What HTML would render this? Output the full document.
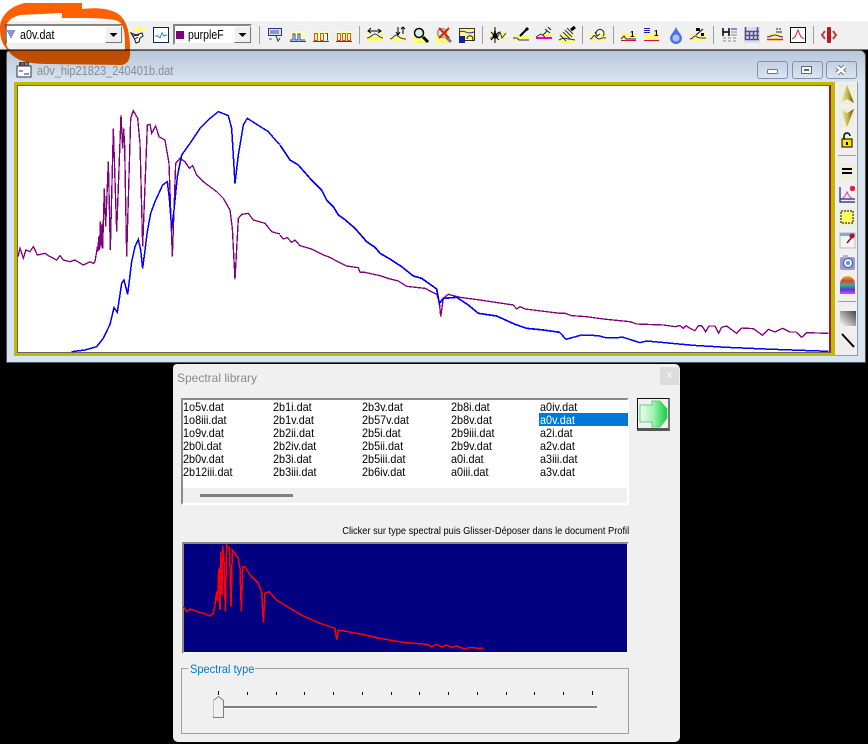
<!DOCTYPE html>
<html><head><meta charset="utf-8"><style>
html,body{margin:0;padding:0;background:#000;width:868px;height:744px;overflow:hidden}
body{position:relative;font-family:"Liberation Sans",sans-serif;color:#000}
div{position:absolute;box-sizing:border-box}
.t{white-space:nowrap;line-height:13px;font-size:11.5px;transform-origin:0 0}
.c{transform:scaleX(.906)}
.row{position:absolute;left:0;white-space:nowrap}
.wb{top:61px;height:18px;width:31px;border:1px solid #7f93ad;border-radius:3px;background:linear-gradient(#c3d0df,#d9e5f2)}
svg{position:absolute;left:0;top:0}
</style></head><body>
<div style="left:0;top:0;width:868px;height:21px;background:#fff"></div>
<div style="left:0;top:21px;width:868px;height:28px;background:#f0f0f0"></div>
<div style="left:0;top:49px;width:868px;height:1px;background:#777"></div>

<div style="left:6px;top:50px;width:860px;height:313px;background:#d7e4f2;border:1px solid #555;border-radius:4px 6px 0 0"></div>
<div style="left:7px;top:51px;width:858px;height:31px;background:linear-gradient(#b9c8d8,#d7e4f2);border-radius:3px 5px 0 0"></div>
<div class="t" style="left:37px;top:65px;color:#8b8b8b;font-size:12.500px;transform:scaleX(.88)">a0v_hip21823_240401b.dat</div>
<div class="wb" style="left:757px"></div><div class="wb" style="left:792px"></div><div class="wb" style="left:826px"></div>
<div style="left:14px;top:82px;width:821px;height:274px;background:#c4b800"></div>
<div style="left:17px;top:85px;width:814px;height:268px;background:#fff;border:1px solid #666;border-right:2px solid #9a1c1c"></div>
<div style="left:835px;top:82px;width:23px;height:274px;background:#f0f0f0;border-right:1px solid #999;border-bottom:1px solid #999"></div>

<div style="left:5px;top:24px;width:118px;height:21px;background:#fff;border:2px solid #858585;border-right-color:#eee;border-bottom-color:#eee"></div>
<div class="t" style="left:20px;top:29px;font-size:12.500px;transform:scaleX(.86)">a0v.dat</div>
<div style="left:105px;top:26px;width:17px;height:17px;background:#f0f0f0;border:1px solid;border-color:#fff #777 #777 #fff"></div>
<div style="left:173px;top:24px;width:79px;height:21px;background:#fff;border:2px solid #858585;border-right-color:#eee;border-bottom-color:#eee"></div>
<div style="left:176px;top:31px;width:8px;height:8px;background:#800080"></div>
<div class="t" style="left:188px;top:29px;font-size:12.500px;transform:scaleX(.84)">purpleF</div>
<div style="left:234px;top:26px;width:17px;height:17px;background:#f0f0f0;border:1px solid;border-color:#fff #777 #777 #fff"></div>

<div style="left:173px;top:364px;width:507px;height:378px;background:#f0f0f0;border-radius:4px 5px 5px 5px"></div>
<div class="t" style="left:177px;top:372px;color:#8b8b8b;font-size:12px">Spectral library</div>
<div style="left:660px;top:367px;width:19px;height:18px;background:#dcdcdc;color:#fff;font-size:10px;line-height:17px;text-align:center">x</div>

<div style="left:181px;top:398px;width:448px;height:107px;background:#f0f0f0;border:2px solid;border-color:#8a8a8a #fff #fff #8a8a8a"></div>
<div style="left:183px;top:400px;width:444px;height:88px;background:#fff"></div>
<div style="left:200px;top:494px;width:93px;height:3px;background:#808080"></div>
<div style="left:539px;top:413px;width:89px;height:13px;background:#0078d7"></div>
<div class="t c" style="left:183px;top:401px;font-size:12px"><span class="row" style="top:0">1o5v.dat</span><span class="row" style="top:13px">1o8iii.dat</span><span class="row" style="top:26px">1o9v.dat</span><span class="row" style="top:39px">2b0i.dat</span><span class="row" style="top:52px">2b0v.dat</span><span class="row" style="top:65px">2b12iii.dat</span></div>
<div class="t c" style="left:273px;top:401px;font-size:12px"><span class="row" style="top:0">2b1i.dat</span><span class="row" style="top:13px">2b1v.dat</span><span class="row" style="top:26px">2b2ii.dat</span><span class="row" style="top:39px">2b2iv.dat</span><span class="row" style="top:52px">2b3i.dat</span><span class="row" style="top:65px">2b3iii.dat</span></div>
<div class="t c" style="left:362px;top:401px;font-size:12px"><span class="row" style="top:0">2b3v.dat</span><span class="row" style="top:13px">2b57v.dat</span><span class="row" style="top:26px">2b5i.dat</span><span class="row" style="top:39px">2b5ii.dat</span><span class="row" style="top:52px">2b5iii.dat</span><span class="row" style="top:65px">2b6iv.dat</span></div>
<div class="t c" style="left:451px;top:401px;font-size:12px"><span class="row" style="top:0">2b8i.dat</span><span class="row" style="top:13px">2b8v.dat</span><span class="row" style="top:26px">2b9iii.dat</span><span class="row" style="top:39px">2b9v.dat</span><span class="row" style="top:52px">a0i.dat</span><span class="row" style="top:65px">a0iii.dat</span></div>
<div class="t c" style="left:540px;top:401px;font-size:12px"><span class="row" style="top:0">a0iv.dat</span><span class="row" style="top:13px;color:#fff">a0v.dat</span><span class="row" style="top:26px">a2i.dat</span><span class="row" style="top:39px">a2v.dat</span><span class="row" style="top:52px">a3iii.dat</span><span class="row" style="top:65px">a3v.dat</span></div>
<div class="t" style="right:239px;top:525px;font-size:10px;transform:scaleX(.925);transform-origin:100% 0">Clicker sur type spectral puis Glisser-Déposer dans le document Profil</div>

<div style="left:637px;top:398px;width:33px;height:33px;background:#f0f0f0;border:1px solid #111;border-bottom:3px solid #555;border-right:2px solid #777"></div>
<div style="left:182px;top:542px;width:447px;height:112px;background:#000080;border:2px solid;border-color:#8a8a8a #f6f6f6 #f6f6f6 #8a8a8a"></div>
<div style="left:181px;top:668px;width:448px;height:66px;border:1px solid #a0a0a0"></div>
<div class="t" style="left:188px;top:663px;background:#f0f0f0;color:#0078d7;padding:0 2px;font-size:12px;width:67px;overflow:visible"><span style="display:inline-block;transform:scaleX(.92);transform-origin:0 0">Spectral type</span></div>

<svg width="868" height="744" viewBox="0 0 868 744" xmlns="http://www.w3.org/2000/svg">
<defs>
<pattern id="y" width="2" height="2" patternUnits="userSpaceOnUse"><rect width="2" height="2" fill="#ffffc0"/><rect width="1" height="1" fill="#ffff30"/><rect x="1" y="1" width="1" height="1" fill="#ffff30"/></pattern>
<linearGradient id="gold" x1="0" y1="0" x2="1" y2="0"><stop offset="0" stop-color="#eeeab8"/><stop offset=".5" stop-color="#c4b94a"/><stop offset="1" stop-color="#5a5010"/></linearGradient>
<linearGradient id="grn" x1="0" y1="0" x2="1" y2="0"><stop offset="0" stop-color="#f0fff0"/><stop offset=".5" stop-color="#a0f0b0"/><stop offset="1" stop-color="#10d040"/></linearGradient>
<linearGradient id="rb" x1="0" y1="0" x2="0" y2="1"><stop offset="0" stop-color="#e8c020"/><stop offset=".25" stop-color="#e04040"/><stop offset=".5" stop-color="#40b080"/><stop offset=".75" stop-color="#4040e0"/><stop offset="1" stop-color="#f040e0"/></linearGradient>
<linearGradient id="gr2" x1="0" y1="1" x2="1" y2="0"><stop offset="0" stop-color="#fff"/><stop offset="1" stop-color="#444"/></linearGradient>
</defs>

<!-- separators -->
<g fill="#a0a0a0">
<rect x="259" y="26" width="1" height="18"/><rect x="359" y="26" width="1" height="18"/><rect x="482" y="26" width="1" height="18"/><rect x="582" y="26" width="1" height="18"/><rect x="613" y="26" width="1" height="18"/><rect x="713" y="26" width="1" height="18"/><rect x="813" y="26" width="1" height="18"/>
<rect x="838" y="155" width="18" height="1"/><rect x="838" y="301" width="18" height="1"/>
</g>
<!-- combo arrows -->
<path d="M109.500 33h8l-4 4z M238.500 33h8l-4 4z" fill="#000"/>
<path d="M7 31h8M8 33h6M9 35h4M10 37h2" stroke="#2020c0" fill="none"/>

<!-- toolbar icons -->
<g fill="none" stroke-width="1">
<g transform="translate(130,27)"><rect x="4" y="0" width="12" height="5" fill="url(#y)"/><path d="M1 6l5 2 6-2 1 3-3 2-1 4-3 1-2-5z" fill="#fff" stroke="#111"/><path d="M3 9l6-1M5 12l3-2" stroke="#111"/></g>
<g transform="translate(153,27)"><rect x=".5" y=".5" width="15" height="15" fill="#fff" stroke="#0a2a50"/><path d="M2 9h3l2 2 2-5 2 3 3-1" stroke="#3080c0"/></g>
<g transform="translate(268,28)"><rect x=".5" y=".5" width="13" height="7" fill="#d8e0f0" stroke="#303080"/><path d="M2 3h9M2 5h9" stroke="#3050b0"/><path d="M1 11h3" stroke="#b03030"/><path d="M8 8l2 5 2-3" stroke="#333"/></g>
<g transform="translate(290,28)"><rect x="1" y="3" width="14" height="9" fill="#ffffb0"/><path d="M0 12h3v-6h2v6h3v-6h2v6h5" stroke="#2040d0"/><path d="M0 13.500h16" stroke="#2040d0"/></g>
<g transform="translate(313,28)"><rect x="1" y="3" width="15" height="9" fill="#ffffb0"/><path d="M1.500 5.500h3v7h-3zM7.500 5.500h3v7h-3z" stroke="#e05020"/><path d="M0 13.500h16" stroke="#2040d0"/><path d="M12.500 5.500h2v7" stroke="#2040d0"/></g>
<g transform="translate(336,28)"><rect x="1" y="3" width="15" height="9" fill="#ffffb0"/><path d="M1.500 5.500h3v7h-3zM6.500 5.500h3v7h-3zM11.500 5.500h3v7h-3z" stroke="#e05020"/><path d="M0 13.500h16" stroke="#2040d0"/></g>
<g transform="translate(367,27)"><rect y="7" width="16" height="8" fill="url(#y)"/><path d="M1 4h13M11 2l3 2-3 2M4 1L1 4l3 2" stroke="#000"/><path d="M0 11c4 0 5-4 8-4s4 4 8 4" stroke="#2020d0"/></g>
<g transform="translate(390,27)"><rect y="8" width="16" height="7" fill="url(#y)"/><path d="M8 0v8M6 5l2 3 2-3M13 0v7M11 2l2-2 2 2" stroke="#000"/><path d="M0 12c3 0 4-4 6-4s3 4 10 4" stroke="#2020d0"/></g>
<g transform="translate(413,27)"><rect y="4" width="12" height="12" fill="url(#y)"/><circle cx="6" cy="6" r="4.500" fill="#d0f0ff" stroke="#000" stroke-width="1.500"/><path d="M10 10l5 5" stroke="#000" stroke-width="3"/></g>
<g transform="translate(436,27)"><rect y="5" width="12" height="11" fill="url(#y)"/><circle cx="6" cy="6" r="4.500" fill="#dde" stroke="#999" stroke-width="1.500"/><path d="M10 10l5 5" stroke="#777" stroke-width="3"/><path d="M3 1l10 10M13 1L3 11" stroke="#e02000" stroke-width="2"/></g>
<g transform="translate(459,28)"><rect x=".5" y=".5" width="15" height="12" fill="url(#y)" stroke="#333"/><path d="M1 4c4-3 6 3 14 0" stroke="#2020d0"/><rect y="8" width="6" height="7" fill="#1020a0"/><path d="M8 11a3 3 0 1 1 5 2" stroke="#222"/></g>
<g transform="translate(490,27)"><rect x="1" y="4" width="15" height="8" fill="url(#y)"/><path d="M0 11h3l2-8 2 8 3-6 2 6 4-5" stroke="#2020d0"/><circle cx="5" cy="9" r="2.500" fill="#000"/><path d="M1 5l8 8M9 5l-8 8M5 0v16" stroke="#000"/></g>
<g transform="translate(513,27)"><rect y="8" width="16" height="6" fill="url(#y)"/><path d="M0 11h4l2 2 10 0" stroke="#2020d0"/><path d="M7 9l7-7" stroke="#000" stroke-width="2"/><path d="M13 3l2-2" stroke="#000" stroke-width="3"/></g>
<g transform="translate(536,26)"><rect y="8" width="16" height="6" fill="url(#y)"/><path d="M0 12h16" stroke="#e000e0" stroke-width="2"/><path d="M0 11l5-3 4 3" stroke="#2020d0"/><path d="M7 9l4-4M9 3l5 4M12 1l3 3" stroke="#222"/></g>
<g transform="translate(559,27)"><rect y="6" width="14" height="10" fill="url(#y)"/><path d="M4 5l7 7M6 3l7 7M8 1l6 6M1 8l6 6" stroke="#333"/><path d="M12 3l4-3" stroke="#000" stroke-width="3"/><path d="M0 13l4-2 12 2" stroke="#2020d0"/></g>
<g transform="translate(590,27)"><rect y="7" width="16" height="7" fill="url(#y)"/><path d="M0 12c3 0 3-5 5-3s2 3 4 3 3-2 7-1" stroke="#2020d0"/><path d="M7 9a4 4 0 1 1 6 0M5 5l2 4 3-2" stroke="#222"/></g>
<g transform="translate(621,28)"><rect y="5" width="15" height="9" fill="url(#y)"/><text x="9" y="9" font-size="8" font-family="Liberation Sans" font-weight="bold" fill="#000" stroke="none">1</text><path d="M0 12.500h15" stroke="#e00060"/><path d="M0 11l3-3 2 3h10" stroke="#222"/></g>
<g transform="translate(644,27)"><rect y="6" width="15" height="9" fill="url(#y)"/><path d="M0 1.500h6M0 3.500h6M0 5.500h6" stroke="#1020c0"/><text x="10" y="9" font-size="8" font-family="Liberation Sans" font-weight="bold" fill="#000" stroke="none">1</text><path d="M0 13.500h15" stroke="#e00060"/></g>
<g transform="translate(668,27)"><path d="M8 0c2 5 6 8 6 11a6 6 0 0 1-12 0c0-3 4-6 6-11z" fill="#5070e8"/><circle cx="8" cy="11" r="3.500" fill="#b0c0ff"/></g>
<g transform="translate(690,27)"><rect y="6" width="16" height="8" fill="url(#y)"/><path d="M0 12c3 0 3-3 5-3s2 3 11 2" stroke="#2020d0"/><path d="M6 8l7-6" stroke="#000"/><rect x="6" y="1" width="4" height="3" fill="#000"/><rect x="11" y="6" width="3" height="3" fill="#000"/></g>
<g transform="translate(722,27)"><path d="M1 1v8M7 1v8M1 5h6" stroke="#000" stroke-width="1.500"/><path d="M9 2h6" stroke="#2020d0"/><path d="M9 5h6M9 8h6M1 11h3M6 11h3M11 11h3M1 14h3M6 14h3M11 14h3" stroke="#888"/></g>
<g transform="translate(744,27)"><rect x="0" y="0" width="16" height="16" fill="#dcdcec"/><path d="M1.500 0v13M5.500 4v9M9.500 4v9M13.500 0v13M1 4.500h14M1 8.500h14M1 12.500h14" stroke="#505090" stroke-width="1.500"/></g>
<g transform="translate(767,27)"><rect y="6" width="16" height="9" fill="url(#y)"/><path d="M0 12.500h16" stroke="#e000e0" stroke-width="1.500"/><path d="M0 10c4 0 5-2 8-2s4 2 8 2" stroke="#2020d0"/><path d="M9 2h2M12 2h2M9 5h6" stroke="#222"/></g>
<g transform="translate(790,27)"><rect x=".5" y=".5" width="15" height="15" fill="#fff" stroke="#111"/><path d="M2 12l3-2 3-7 3 7 3 2" stroke="#e02020"/></g>
<g transform="translate(821,27)"><rect x="6" y="0" width="4" height="16" rx="1" fill="#c01818"/><path d="M4 4L1 8l3 4M12 4l3 4-3 4" stroke="#c04040" stroke-width="2"/></g>
</g>

<!-- MDI title icon and buttons -->
<g fill="none">
<rect x="17" y="66" width="14" height="11" fill="#fff" stroke="#333"/><rect x="19" y="62" width="10" height="4" fill="#444"/><rect x="21" y="63" width="3" height="2" fill="#e03030"/><rect x="25" y="63" width="3" height="2" fill="#30a0e0"/><path d="M19 71h4M24 74h5" stroke="#2020c0"/>
<rect x="767.500" y="69.500" width="10" height="4" rx="1" fill="#fff" stroke="#6a7688"/>
<rect x="801.500" y="66.500" width="10" height="7" fill="#fff" stroke="#5a6a80"/><rect x="804" y="69" width="5" height="2" fill="#5a6a80"/>
<path d="M837 66.500l8 7M845 66.500l-8 7" stroke="#6a7688" stroke-width="4.500"/><path d="M837 66.500l8 7M845 66.500l-8 7" stroke="#fff" stroke-width="2.500"/>
<path d="M862 50h4v4z" fill="#000"/>
</g>

<!-- Right toolbar icons -->
<rect x="839" y="84" width="16" height="20" fill="#eeeedd"/>
<rect x="839" y="107" width="16" height="20" fill="#eeeedd"/>
<path d="M847 85l7 18-7-4-6 4z" fill="url(#gold)"/>
<path d="M841 109l6 4 7-4-7 18z" fill="url(#gold)"/>
<rect x="839" y="132" width="16" height="16" fill="#eeeedd"/>
<rect x="842" y="139" width="10" height="8" fill="#ffe000" stroke="#000"/><path d="M844 139v-3a3 3 0 0 1 6 0" fill="none" stroke="#000" stroke-width="1.500"/><rect x="846" y="142" width="2" height="3" fill="#000"/>
<rect x="839" y="163" width="16" height="17" fill="#eeeedd"/>
<rect x="842" y="168" width="10" height="2" fill="#000"/><rect x="842" y="172" width="10" height="2" fill="#000"/>
<path d="M840 187v15h15M840 199h15" fill="none" stroke="#1020a0" stroke-width="1.200"/><path d="M842 199l3-3 2-4 2 4 4 3" fill="none" stroke="#d040a0"/><rect x="850" y="186" width="5" height="5" rx="2" fill="#e02040"/>
<rect x="839" y="209" width="16" height="17" fill="#eeeedd"/><rect x="841" y="211" width="12" height="12" fill="#ffff60" stroke="#000" stroke-dasharray="2 1"/>
<rect x="840" y="233" width="15" height="15" fill="#f4f4f4" stroke="#bbb"/><rect x="840" y="233" width="15" height="3" fill="#8aa8d0"/><path d="M847 243l5-6" stroke="#801020" stroke-width="1.500"/><circle cx="852" cy="236" r="2.500" fill="#b01030"/>
<rect x="840" y="257" width="15" height="13" rx="2" fill="#9a9ad0"/><circle cx="848" cy="263" r="4.500" fill="#e8f0ff" stroke="#5050a0"/><circle cx="848" cy="263" r="2" fill="#40a0e0"/><rect x="843" y="255" width="5" height="3" fill="#b0b0d8"/>
<path d="M840 294v-10a7.500 8 0 0 1 15 0v10z" fill="url(#rb)"/>
<rect x="840" y="311" width="16" height="15" fill="url(#gr2)"/>
<rect x="839" y="332" width="17" height="18" fill="#eeeeee"/><path d="M842 334l12 13" stroke="#000" stroke-width="2"/>

<!-- dialog arrow -->
<path d="M640 405h12v-4h8l7 8v9l-7 9h-8v-5h-12z" fill="url(#grn)" stroke="#30d050" stroke-width=".8"/>

<!-- dialog close & slider -->
<path stroke="#000" fill="none" d="M218.500 691v4M247.500 692v3M276.500 692v3M304.500 692v3M333.500 692v3M362.500 692v3M391.500 692v3M419.500 692v3M448.500 692v3M477.500 692v3M506.500 692v3M534.500 692v3M563.500 692v3M592.500 691v4"/>
<rect x="221" y="706" width="376" height="2" fill="#808080"/><rect x="221" y="708" width="376" height="1" fill="#fff"/>
<path d="M213.500 717.500v-17l5-4 5 4v17z" fill="#f0f0f0" stroke="#808080"/>
<path d="M214 700.500v16" stroke="#fff"/>

<!-- Main spectra -->
<g fill="none" stroke-linejoin="miter" shape-rendering="crispEdges">
<g stroke="#800080">
<polyline transform="translate(0,85) scale(.33333)" stroke-width="4" points="54,515 60,490 70,520 78,495 90,500 100,485 112,510 135,505 145,512 170,525 180,512 190,525 210,530 225,525 250,540 270,530 280,535 285,530 290,500 292,485 294,500 296,455 298,495 299,475 301,410 303,490 306,415 308,490 310,415 313,310 317,425 325,230 331,495 340,130 350,440 363,90 368,190 371,130 374,185 380,515 392,100 400,77 413,100 420,175 428,485 442,120 450,118 455,145 467,123 477,155 495,165 507,235 517,515 527,235 540,220 555,230 568,250 578,242 590,270 610,290 650,320 670,340 690,375 697,430 705,583 715,400 725,388 745,385 760,405 795,415 815,440 840,447"/>
<polyline transform="translate(280,85) scale(.33333)" stroke-width="4" points="0,450 10,462 22,458 35,472 45,465 60,482 95,492 130,510 145,515 170,528 200,543 235,548 240,562 255,562 300,572 330,582 355,588 380,604 435,610 470,628 478,650 482,695 490,640 505,628 540,637 600,645 700,660 710,672 720,665 735,672 800,680 840,685"/>
<polyline transform="translate(560,260) scale(.33333)" stroke-width="4" points="0,160 15,160 35,167 80,170 130,177 210,185 230,192 310,195 345,200 360,197 370,205 378,197 390,205 405,212 415,197 425,197 437,215 447,198 465,198 476,220 485,202 500,198 530,220 545,204 580,206 608,226 625,208 645,216 668,205 690,216 708,216 725,232 740,218 805,220"/>
</g>
<g stroke="#0000ff">
<polyline transform="translate(0,85) scale(.33333)" stroke-width="4.500" points="215,800 255,795 290,785 310,760 330,718 342,668 352,682 365,595 372,585 383,628 395,530 405,485 415,463 422,495 428,550 435,495 442,440 452,385 465,350 488,300 502,290 508,340 515,430 522,375 532,275 545,210 570,175 600,130 630,100 655,80 685,92 695,130 705,295 715,210 730,120 742,100 770,118 805,140 835,175 840,178"/>
<polyline transform="translate(280,85) scale(.33333)" stroke-width="5" points="0,180 30,225 55,240 90,280 125,315 140,345 160,365 175,390 190,400 225,430 260,470 285,487 300,505 330,522 365,545 400,573 425,580 470,612 478,655 490,640 530,637 565,660 595,685 650,693 705,718 740,730 790,735 840,742"/>
<polyline transform="translate(560,260) scale(.33333)" stroke-width="4.500" points="0,218 18,238 65,225 115,227 140,234 190,232 240,248 260,243 400,256 500,262 640,268 805,274"/>
</g>
<!-- small spectrum -->
<polyline transform="translate(170,535) scale(.33333)" stroke="#ff0000" stroke-width="4.500" points="40,215 50,230 62,222 80,230 100,235 120,243 130,235 135,210 140,170 143,200 146,100 150,225 152,50 156,180 158,32 162,80 166,230 170,30 178,40 180,95 183,215 187,45 195,55 205,70 210,100 214,230 218,95 225,95 240,120 265,145 275,170 280,262 285,175 297,170 320,195 360,220 400,243 450,265 495,280 500,315 505,285 560,295 640,312 700,322 770,328 785,335 800,328 815,336 830,330 845,337 860,333 885,342 895,338 940,340"/>
</g>
<path fill-rule="evenodd" fill="#ff6000" style="mix-blend-mode:multiply" d="M82 3L25 3C10 6 0 16 0 28C0 40 3 46 12 55C20 62 32 64 50 64L122 65C128 64 131 58 130 50C130 35 128 20 117 13C105 7 92 8 82 9Z M62 13L20 15C9 18 5 24 5 32C5 42 6 47 10 50L125 50C125 35 125 25 118 21C110 18 90 18 62 18Z"/>
</svg>
</body></html>
